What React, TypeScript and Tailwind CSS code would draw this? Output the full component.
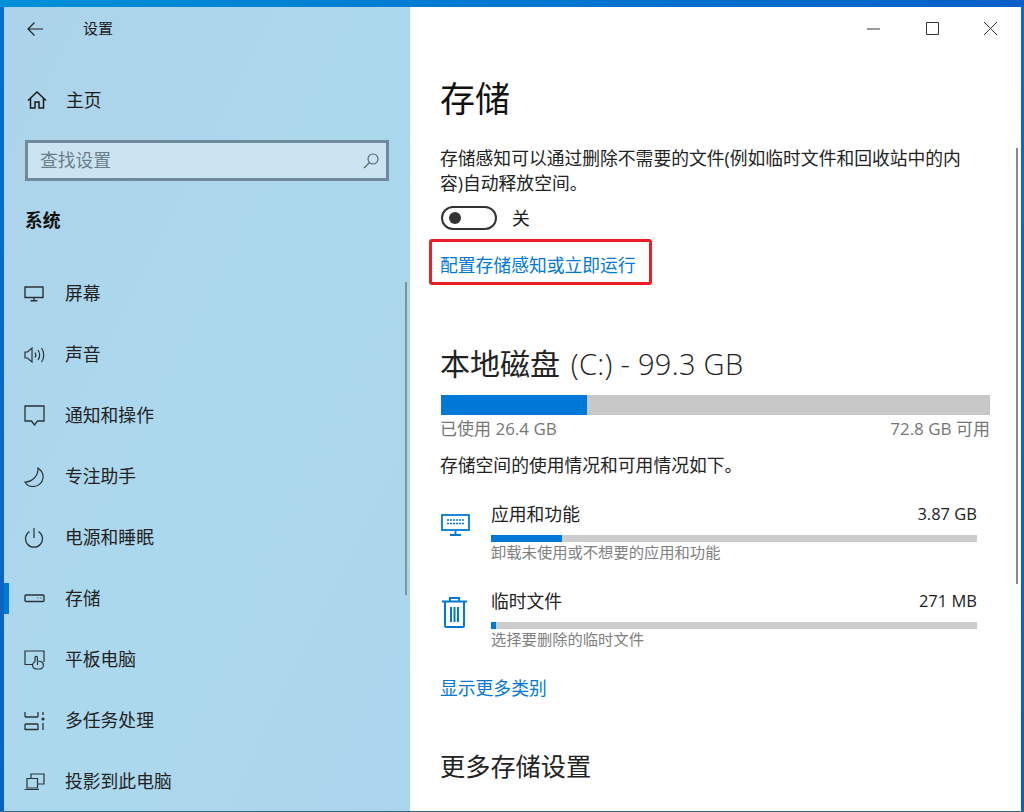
import React from 'react';

const stroke = { fill: 'none', stroke: 'currentColor', strokeWidth: 1.2 };

const BackArrow = () => (
  <svg width="16" height="14" viewBox="0 0 16 14" {...stroke}>
    <path d="M7.500.5 1 7l6.500 6.500M1 7h15" />
  </svg>
);

const HomeIcon = () => (
  <svg width="20" height="18" viewBox="0 0 20 18" {...stroke} strokeWidth="1.500">
    <path d="M1 9.500 10 1l9 8.500M3.500 7.500V17h4.500v-6h4v6h4.500V7.500" />
  </svg>
);

const SearchIcon = () => (
  <svg width="16" height="16" viewBox="0 0 16 16" {...stroke} strokeWidth="1.100">
    <circle cx="10" cy="6" r="5" />
    <path d="M6.500 9.500 1 15" />
  </svg>
);

const MonitorIcon = () => (
  <svg width="20" height="16" viewBox="0 0 20 16" {...stroke} strokeWidth="1.400">
    <path d="M1 1h18v10.500H1zM10 11.500v3M6.500 14.800h7" />
  </svg>
);

const Speaker = () => (
  <svg width="21" height="18" viewBox="0 0 21 18" {...stroke}>
    <path d="M1 6h2.500L8 2v14l-4.500-4H1z" />
    <path d="M11 6.500c1 1.500 1 3.500 0 5M14 4c2 3 2 7 0 10M17.500 2c3 4 3 10 0 14" />
  </svg>
);

const Bubble = () => (
  <svg width="21" height="21" viewBox="0 0 21 21" {...stroke} strokeWidth="1.300">
    <path d="M1 1h19v15h-6.500L10.500 20l-3-4H1z" />
  </svg>
);

const MoonIcon = () => (
  <svg width="20" height="20" viewBox="0 0 20 20" {...stroke}>
    <path d="M14 1c4 3 5.500 7 5 10-.5 5-5 8.500-10 8.500-3.500 0-6.500-1.500-8-4.500 7 0 13.500-6 13-14z" />
  </svg>
);

const PowerIcon = () => (
  <svg width="20" height="21" viewBox="0 0 20 21" {...stroke}>
    <path d="M10 1v10M5.500 4.500a8.500 8.500 0 1 0 9 0" />
  </svg>
);

const Drive = () => (
  <svg width="21" height="9" viewBox="0 0 21 9" {...stroke}>
    <rect x="1" y="1" width="19" height="6.500" rx="1" strokeWidth="1.400" />
    <path d="M13.500 4h1M16.500 4h1" />
  </svg>
);

const Tablet = () => (
  <svg width="21" height="20" viewBox="0 0 21 20" {...stroke}>
    <path d="M9 14.500H1V1h19v11" />
    <path d="M13 19c-2.500 0-4.500-1.500-4.500-4 0-1.500 1-2.500 2.500-3.500V7.500a1.200 1.200 0 0 1 2.400 0V11l3 .5c2 .5 3 1.500 3 3.500 0 2.500-2 4-4 4zM13.500 12v3" />
  </svg>
);

const Multitask = () => (
  <svg width="21" height="20" viewBox="0 0 21 20" {...stroke} strokeWidth="1.300">
    <path d="M1 1v5M14 1v5M1 6h13M1 13h13M1 13v6M14 13v6M1 18.500h13" />
    <path d="M19 1v3M19 12v7" />
    <circle cx="19" cy="8" r="1.600" fill="currentColor" stroke="none" />
  </svg>
);

const Project = () => (
  <svg width="21" height="18" viewBox="0 0 21 18" {...stroke}>
    <path d="M7 5V1h13v10h-6" />
    <path d="M3 5.500h10.500V15H3zM.5 16.500H15" />
  </svg>
);

const navItems: { label: string; icon: React.ReactNode; active?: boolean }[] = [
  { label: '屏幕', icon: <MonitorIcon /> },
  { label: '声音', icon: <Speaker /> },
  { label: '通知和操作', icon: <Bubble /> },
  { label: '专注助手', icon: <MoonIcon /> },
  { label: '电源和睡眠', icon: <PowerIcon /> },
  { label: '存储', icon: <Drive />, active: true },
  { label: '平板电脑', icon: <Tablet /> },
  { label: '多任务处理', icon: <Multitask /> },
  { label: '投影到此电脑', icon: <Project /> },
];

const Keyboard = () => (
  <svg width="29" height="22" viewBox="0 0 29 22" fill="none" stroke="#0078d7" strokeWidth="1.800">
    <rect x="1" y="1" width="27" height="15" />
    <path d="M14.500 16v4M9 21h11" />
    <path d="M6 6h17M6 9.500h17" strokeDasharray="2 1" strokeWidth="1.600" />
  </svg>
);

const Trash = () => (
  <svg width="25" height="31" viewBox="0 0 25 31" fill="none" stroke="#0078d7" strokeWidth="2">
    <path d="M0 4.500h25M8 4.500V1h9v3.500M3 4.500v24a1.500 1.500 0 0 0 1.500 1.500h16a1.500 1.500 0 0 0 1.500-1.500v-24" />
    <path d="M9 10v15M12.500 10v15M16 10v15" />
  </svg>
);

const usageRows = [
  { name: '应用和功能', size: '3.87 GB', hint: '卸载未使用或不想要的应用和功能', fill: 'w-[71px]', icon: <Keyboard />, iconBox: 'pt-[13px] pl-[1px]' },
  { name: '临时文件', size: '271 MB', hint: '选择要删除的临时文件', fill: 'w-[5px]', icon: <Trash />, iconBox: 'pt-[9px] pl-[2px]' },
];

export default function App() {
  return (
    <div className="w-[1024px] h-[812px] overflow-hidden flex flex-col bg-[#0078d7] font-['Open_Sans','Noto_Sans_CJK_SC',sans-serif] text-[17.8px] text-[#1a1a1a] border-b border-[#2b6a80]">
      <div className="h-[7px] shrink-0 bg-gradient-to-r from-[#0090d8] to-[#0a5fc8]" />
      <div className="flex flex-1 min-h-0 pl-[4px] pr-[3px] bg-gradient-to-b from-[#0a6ccc] to-[#0a62c0]">
        <aside className="relative w-[406px] shrink-0 bg-gradient-to-br from-[#acd3ea] via-[#acd8ee] to-[#abd5ec]">
          <div className="h-[43px] flex items-center">
            <span className="ml-[23px] text-[#222] flex"><BackArrow /></span>
            <span className="ml-[40px] text-[15px]">设置</span>
          </div>
          <div className="h-[50px] mt-[25px] flex items-center">
            <span className="ml-[23px] flex"><HomeIcon /></span>
            <span className="ml-[19px]">主页</span>
          </div>
          <div className="mt-[15px] mx-[21px] w-[364px] h-[41px] border-[3px] border-[#6f8a9c] bg-[#cbe4f2] flex items-center justify-between pl-[12px] pr-[7px]">
            <span className="text-[#6b7d88]">查找设置</span>
            <span className="flex text-[#52626c]"><SearchIcon /></span>
          </div>
          <div className="h-[24px] mt-[27px] ml-[21px] flex items-center font-bold text-[#111]">系统</div>
          <nav className="mt-[31px]">
            {navItems.map(item => (
              <div key={item.label} className="relative h-[61px] flex items-center">
                {item.active && <div className="absolute left-0 top-[15px] w-[5px] h-[31px] bg-[#0078d7]" />}
                <span className="w-[61px] pl-[20px] flex items-center text-[#2a3338]">{item.icon}</span>
                <span className="text-[#222]">{item.label}</span>
              </div>
            ))}
          </nav>
          <div className="absolute left-[401px] top-[275px] w-[2px] h-[313px] bg-[#7f929e]" />
        </aside>

        <main className="relative flex-1 min-w-0 bg-white pl-[30px]">
          <div className="absolute right-0 top-0 h-[43px] flex items-center text-[#333]">
            <svg width="13" height="2" viewBox="0 0 13 2" className="mr-[46px]" stroke="currentColor"><path d="M0 1h13" /></svg>
            <svg width="13" height="13" viewBox="0 0 13 13" className="mr-[45px]" fill="none" stroke="currentColor"><path d="M.5.5h12v12H.5z" /></svg>
            <svg width="13" height="13" viewBox="0 0 13 13" className="mr-[24px]" fill="none" stroke="currentColor"><path d="M0 0l13 13M13 0 0 13" /></svg>
          </div>

          <h1 className="mt-[63px] h-[58px] text-[35px] font-normal leading-[58px] text-[#111]">存储</h1>
          <p className="w-[530px] mt-[18px] leading-[25px] text-[#222]">
            存储感知可以通过删除不需要的文件(例如临时文件和回收站中的内容)自动释放空间。
          </p>

          <div className="h-[24px] mt-[10px] flex items-center">
            <div className="ml-[1px] w-[56px] h-[24px] rounded-full border-2 border-[#333] flex items-center pl-[6px]">
              <div className="w-[12px] h-[12px] rounded-full bg-[#333]" />
            </div>
            <span className="ml-[15px]">关</span>
          </div>

          <div className="relative h-[40px] mt-[15px] flex items-center text-[#0078d7]">
            <span>配置存储感知或立即运行</span>
            <div className="absolute left-[-11px] top-[-6px] w-[223px] h-[46px] rounded-[3px] border-[3px] border-[#ee1c25]" />
          </div>

          <h2 className="mt-[54px] h-[50px] text-[30px] leading-[50px] text-[#222]">本地磁盘<span className="font-light text-[29px] ml-[3px] tracking-[0.3px]"> (C:) - 99.3 GB</span></h2>

          <div className="ml-[1px] w-[549px] h-[20px] mt-[6px] bg-[#c8c8c8]">
            <div className="w-[146px] h-full bg-[#0078d7]" />
          </div>
          <div className="w-[550px] h-[26px] mt-[1px] flex items-center justify-between text-[17px] text-[#767676]">
            <span>已使用 26.4 GB</span>
            <span>72.8 GB 可用</span>
          </div>
          <p className="mt-[10px] h-[26px] leading-[26px] text-[#222]">存储空间的使用情况和可用情况如下。</p>

          <div className="mt-[23px] flex flex-col gap-[25px]">
            {usageRows.map(row => (
              <div key={row.name} className="flex w-[537px]">
                <div className={`w-[51px] shrink-0 ${row.iconBox}`}>{row.icon}</div>
                <div className="flex-1">
                  <div className="h-[26px] flex items-center justify-between text-[#222]">
                    <span>{row.name}</span>
                    <span className="text-[16.500px]">{row.size}</span>
                  </div>
                  <div className="h-[7px] mt-[8px] bg-[#cccccc]">
                    <div className={`h-full bg-[#0078d7] ${row.fill}`} />
                  </div>
                  <div className="h-[21px] text-[15.300px] leading-[21px] text-[#808080]">{row.hint}</div>
                </div>
              </div>
            ))}
          </div>

          <div className="mt-[25px] h-[26px] flex items-center text-[#0078d7]">显示更多类别</div>
          <h2 className="mt-[45px] text-[25.200px] leading-[40px] text-[#222]">更多存储设置</h2>

          <div className="absolute right-[3px] top-[141px] w-[2px] h-[436px] bg-[#8a8a8a]" />
        </main>
      </div>
    </div>
  );
}
